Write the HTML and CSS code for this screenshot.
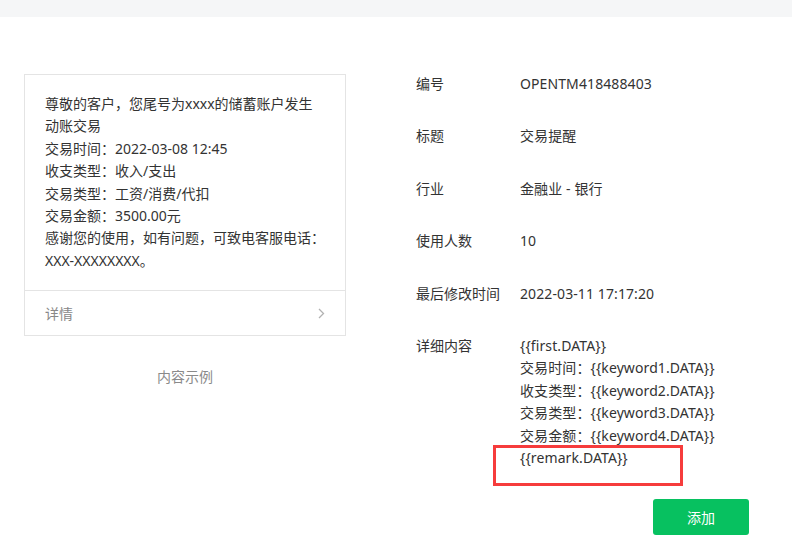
FILE: index.html
```html
<!DOCTYPE html>
<html lang="zh-CN">
<head>
    <meta charset="UTF-8">
    <title>模板详情</title>
    <link rel="stylesheet" href="styles.css">
</head>
<body>
    <div class="topbar"></div>
    <div class="main">
        <div class="preview">
            <div class="card">
                <div class="card-body">
                    <p>尊敬的客户，您尾号为xxxx的储蓄账户发生动账交易</p>
                    <p>交易时间：2022-03-08 12:45</p>
                    <p>收支类型：收入/支出</p>
                    <p>交易类型：工资/消费/代扣</p>
                    <p>交易金额：3500.00元</p>
                    <p>感谢您的使用，如有问题，可致电客服电话：XXX-XXXXXXXX。</p>
                </div>
                <div class="card-foot">
                    <span>详情</span>
                    <svg class="arrow" width="7" height="11" viewBox="0 0 7 11"><polyline points="1,1 5.5,5.5 1,10" fill="none" stroke="#b2b2b2" stroke-width="1.3"/></svg>
                </div>
            </div>
            <div class="caption">内容示例</div>
        </div>

        <div class="info">
            <div class="row"><div class="label">编号</div><div class="value">OPENTM418488403</div></div>
            <div class="row"><div class="label">标题</div><div class="value">交易提醒</div></div>
            <div class="row"><div class="label">行业</div><div class="value">金融业 - 银行</div></div>
            <div class="row"><div class="label">使用人数</div><div class="value">10</div></div>
            <div class="row"><div class="label">最后修改时间</div><div class="value">2022-03-11 17:17:20</div></div>
            <div class="row">
                <div class="label">详细内容</div>
                <div class="value detail">
                    <p>{{first.DATA}}</p>
                    <p>交易时间：{{keyword1.DATA}}</p>
                    <p>收支类型：{{keyword2.DATA}}</p>
                    <p>交易类型：{{keyword3.DATA}}</p>
                    <p>交易金额：{{keyword4.DATA}}</p>
                    <p>{{remark.DATA}}</p>
                    <div class="mark"></div>
                </div>
            </div>
            <div class="actions">
                <button type="button">添加</button>
            </div>
        </div>
    </div>
</body>
</html>
```

FILE: styles.css
```css
body { margin: 0; background: #fff; font-family: "Noto Sans", "Noto Sans CJK SC", sans-serif; font-size: 14px; color: #333; }
p { margin: 0; }
.topbar { height: 17px; background: #f5f6f7; }
.main { display: flex; gap: 70px; padding: 56px 0 0 24px; }
.preview { width: 322px; flex-shrink: 0; padding-top: 1px; }
.card { border: 1px solid #e4e4e4; }
.card-body { padding: 18px 20px 18px 20px; line-height: 22.4px; }
.card-foot { display: flex; justify-content: space-between; align-items: center; height: 44px; padding: 0 20px; border-top: 1px solid #e4e4e4; color: #888; }
.caption { margin-top: 30px; text-align: center; color: #8a8a8a; }
.info { width: 333px; }
.row { display: flex; line-height: 22.4px; margin-bottom: 30px; }
.label { width: 104px; flex-shrink: 0; }
.value { letter-spacing: 0.1px; }
.detail { position: relative; }
.mark { position: absolute; left: -27px; top: 110px; width: 184px; height: 35px; border: 3px solid #f63c3c; }
.actions { display: flex; justify-content: flex-end; margin-top: 1px; }
button { width: 96px; height: 36px; border: none; border-radius: 3px; background: #07c160; color: #fff; font-family: inherit; font-size: 14px; cursor: pointer; }
```
